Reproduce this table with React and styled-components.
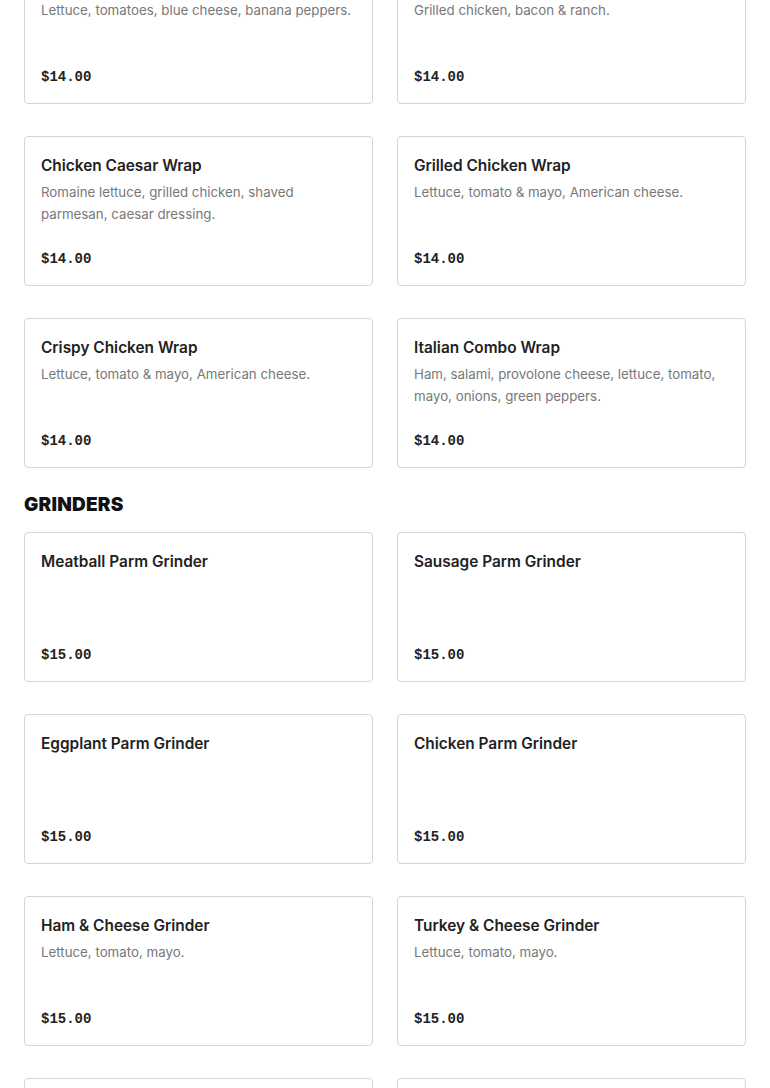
import React from "react";
import styled, { createGlobalStyle } from "styled-components";

const GlobalStyle = createGlobalStyle`
  html, body {
    margin: 0;
    padding: 0;
    background: #fff;
  }
  body {
    font-family: Inter, "Noto Sans", sans-serif;
    color: #222;
    overflow: hidden;
  }
`;

const Page = styled.main`
  padding: 0 24px;
  margin-top: -46px;
`;

const Section = styled.section`
  & + & {
    margin-top: 24px;
  }
`;

const SectionTitle = styled.h2`
  margin: 0 0 16px;
  padding-top: 1px;
  font-size: 19px;
  line-height: 23px;
  font-weight: 900;
  letter-spacing: 0.2px;
  text-transform: uppercase;
  color: #111;
`;

const Grid = styled.div`
  display: grid;
  grid-template-columns: 1fr 1fr;
  column-gap: 24px;
  row-gap: 32px;
`;

const Card = styled.article`
  box-sizing: border-box;
  height: 150px;
  padding: 16px;
  border: 1px solid #d4d4d4;
  border-radius: 4px;
  display: flex;
  flex-direction: column;
  background: #fff;
`;

const Name = styled.h3`
  margin: 0 0 3px;
  padding-top: 1px;
  font-size: 15.4px;
  line-height: 24px;
  font-weight: 600;
  color: #222;
`;

const Description = styled.p`
  margin: 0;
  font-size: 13.3px;
  line-height: 22px;
  color: #787878;
`;

const Price = styled.span`
  margin-top: auto;
  font-family: "Liberation Mono", "DejaVu Sans Mono", monospace;
  font-size: 14px;
  line-height: 20px;
  font-weight: 700;
  color: #222;
`;

const menu = [
  {
    title: "Wraps",
    hideTitle: true,
    price: "$14.00",
    items: [
      ["Buffalo Chicken Wrap", "Lettuce, tomatoes, blue cheese, banana peppers."],
      ["Chicken Bacon Ranch Wrap", "Grilled chicken, bacon & ranch."],
      ["Chicken Caesar Wrap", "Romaine lettuce, grilled chicken, shaved parmesan, caesar dressing."],
      ["Grilled Chicken Wrap", "Lettuce, tomato & mayo, American cheese."],
      ["Crispy Chicken Wrap", "Lettuce, tomato & mayo, American cheese."],
      ["Italian Combo Wrap", "Ham, salami, provolone cheese, lettuce, tomato, mayo, onions, green peppers."],
    ],
  },
  {
    title: "Grinders",
    price: "$15.00",
    items: [
      ["Meatball Parm Grinder", ""],
      ["Sausage Parm Grinder", ""],
      ["Eggplant Parm Grinder", ""],
      ["Chicken Parm Grinder", ""],
      ["Ham & Cheese Grinder", "Lettuce, tomato, mayo."],
      ["Turkey & Cheese Grinder", "Lettuce, tomato, mayo."],
      ["Italian Grinder", "Ham, salami, provolone cheese."],
      ["Steak & Cheese Grinder", "Peppers, onions, mushrooms."],
    ],
  },
];

function MenuCard({ name, description, price }) {
  return (
    <Card>
      <Name>{name}</Name>
      {description ? <Description>{description}</Description> : null}
      <Price>{price}</Price>
    </Card>
  );
}

export default function App() {
  return (
    <>
      <GlobalStyle />
      <Page>
        {menu.map(section => (
          <Section key={section.title}>
            {section.hideTitle ? null : <SectionTitle>{section.title}</SectionTitle>}
            <Grid>
              {section.items.map(([name, description]) => (
                <MenuCard
                  key={name}
                  name={name}
                  description={description}
                  price={section.price}
                />
              ))}
            </Grid>
          </Section>
        ))}
      </Page>
    </>
  );
}
